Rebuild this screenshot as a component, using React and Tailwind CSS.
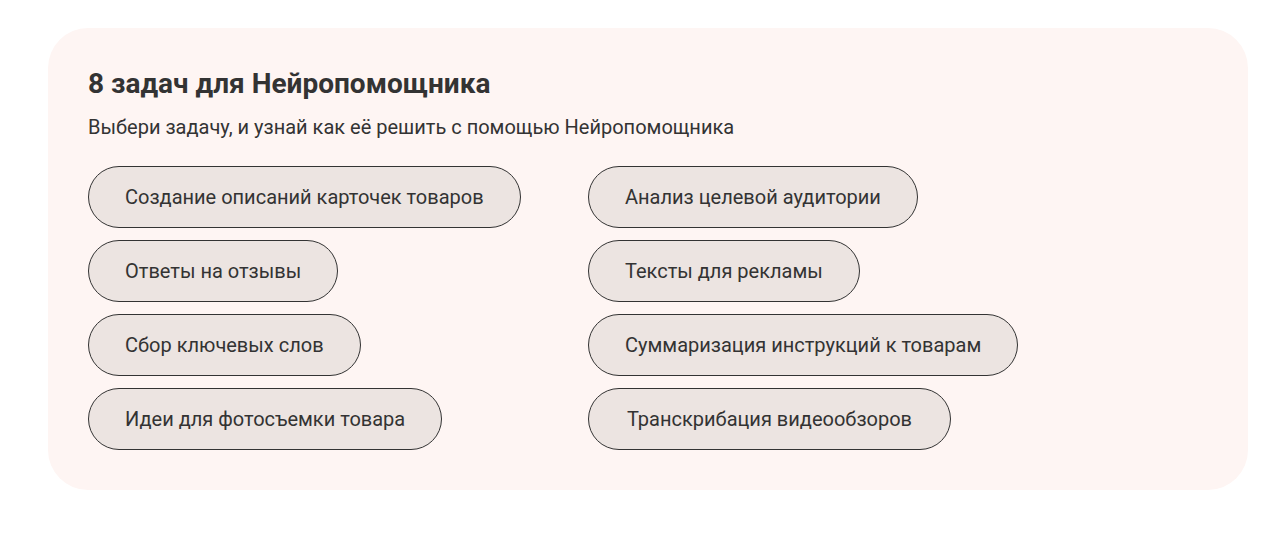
import React from "react";

const left = [
  "Создание описаний карточек товаров",
  "Ответы на отзывы",
  "Сбор ключевых слов",
  "Идеи для фотосъемки товара",
];
const right = [
  "Анализ целевой аудитории",
  "Тексты для рекламы",
  "Суммаризация инструкций к товарам",
  "Транскрибация видеообзоров",
];

function Pill({ children, wide }) {
  return (
    <button
      className={
        "h-[62px] rounded-full border border-[#333333] bg-[#ece4e1] text-[20px] leading-[28px] text-[#333333] text-left whitespace-nowrap " +
        (wide ? "px-[38px]" : "px-9")
      }
    >
      {children}
    </button>
  );
}

export default function App() {
  return (
    <div
      className="w-[1280px] h-[534px] bg-white pt-[28px] pl-[48px]"
      style={{ fontFamily: "Roboto, 'Noto Sans', sans-serif" }}
    >
      <div className="w-[1200px] h-[462px] rounded-[40px] bg-[#fef5f3] px-10 pt-10">
        <h2 className="text-[28px] leading-[32px] font-bold text-[#333333]">
          8 задач для Нейропомощника
        </h2>
        <p className="mt-[14px] text-[20px] leading-[26px] text-[#333333]">
          Выбери задачу, и узнай как её решить с помощью Нейропомощника
        </p>
        <div className="mt-[26px] grid grid-cols-[500px_1fr]">
          <div className="flex flex-col items-start gap-3">
            {left.map((t) => (
              <Pill key={t}>{t}</Pill>
            ))}
          </div>
          <div className="flex flex-col items-start gap-3">
            {right.map((t, i) => (
              <Pill key={t} wide={i === 3}>
                {t}
              </Pill>
            ))}
          </div>
        </div>
      </div>
    </div>
  );
}
